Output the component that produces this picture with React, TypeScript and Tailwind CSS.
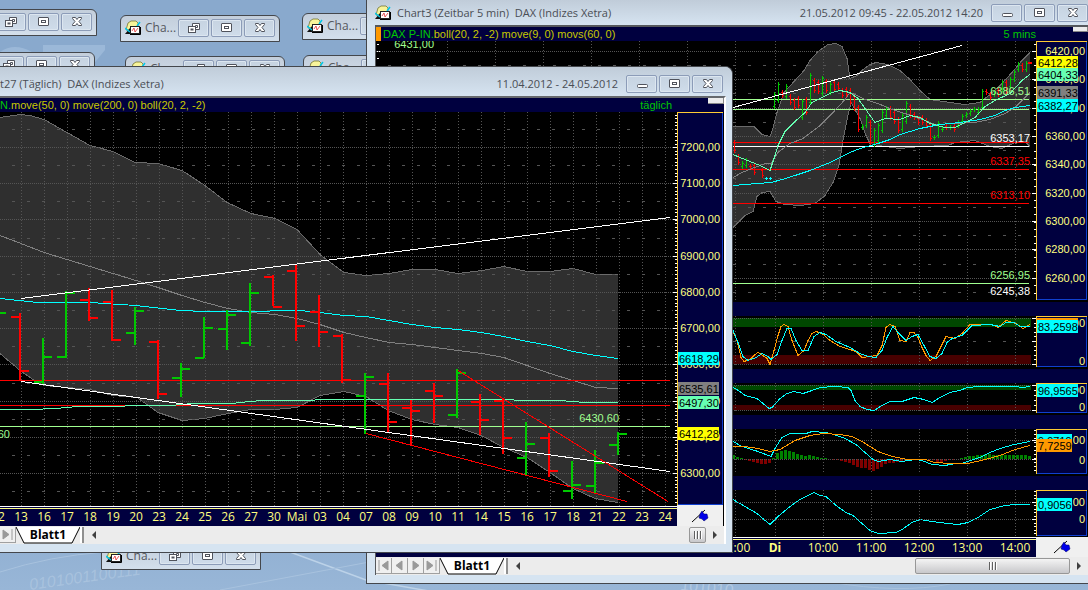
import type { ReactNode } from "react";

type Point = [number, number];
// x, high, low, open, close, rising
type Bar = [number, number, number, number, number, boolean];

const UI_FONT = "font-['Open_Sans','Noto_Sans',sans-serif]";
const CHART_FONT = "font-['Liberation_Sans',Arial,sans-serif]";

const GREEN = "#00c800";
const RED = "#ff0000";
const CYAN = "#00ffff";
const MINT = "#66ffb2";
const LIME = "#a0ff90";
const GRAY = "#808080";
const ORANGE = "#ff9900";
const NAVY = "#00003f";
const LABEL = "#ffff80";

const range = (count: number) => Array.from({ length: count }, (_, i) => i);
const toPoints = (points: Point[]) => points.map((p) => p.join(",")).join(" ");

/* ---------- daily chart data ---------- */

const dailyUpper: Point[] = [
  [0, 117], [20, 114], [30, 115], [44, 119], [67, 132], [90, 145], [113, 151], [135, 162], [158, 163],
  [182, 170], [205, 185], [227, 202], [251, 213], [275, 218], [297, 229], [309, 242], [321, 255],
  [344, 272], [366, 275], [389, 273], [412, 269], [435, 269], [458, 273], [482, 270], [504, 266],
  [527, 271], [550, 271], [573, 268], [596, 274], [618, 274],
];

const dailyLower: Point[] = [
  [0, 353], [20, 370], [33, 379], [44, 385], [90, 389], [113, 395], [137, 397], [158, 412], [182, 420],
  [205, 418], [228, 413], [251, 409], [275, 409], [297, 407], [320, 395], [344, 391], [366, 396],
  [374, 401], [388, 410], [412, 419], [435, 424], [458, 427], [481, 435], [504, 447], [527, 457],
  [550, 472], [573, 488], [595, 498], [618, 502],
];

const dailyMove50: Point[] = [
  [0, 235], [21, 243], [44, 252], [67, 259], [90, 266], [113, 273], [136, 280], [158, 287], [182, 295],
  [205, 302], [228, 308], [251, 312], [275, 314], [297, 318], [320, 324], [344, 332], [366, 337],
  [389, 342], [412, 344], [435, 347], [458, 350], [482, 353], [504, 357], [527, 365], [550, 373],
  [573, 380], [596, 387], [618, 388],
];

const dailyCyan: Point[] = [
  [0, 298], [38, 302], [90, 302], [136, 305], [180, 310], [205, 311], [240, 311], [300, 310], [320, 312],
  [344, 315], [366, 316], [389, 320], [412, 324], [435, 327], [458, 329], [481, 332], [504, 336],
  [527, 341], [550, 345], [573, 351], [596, 355], [618, 358],
];

const dailyMint: Point[] = [
  [0, 409], [32, 409], [55, 408], [78, 406], [124, 406], [126, 405], [170, 405], [193, 403], [232, 403],
  [240, 402], [262, 400], [310, 400], [320, 399], [513, 399], [515, 400], [560, 400], [585, 402], [618, 402],
];

const dailyBars: Bar[] = [
  [20, 313, 381, 316, 370, false],
  [43, 338, 384, 381, 356, true],
  [66, 291, 358, 356, 292, true],
  [89, 288, 321, 299, 317, false],
  [112, 290, 341, 301, 339, false],
  [135, 307, 345, 332, 310, true],
  [158, 340, 399, 341, 393, false],
  [181, 363, 397, 377, 368, true],
  [204, 317, 358, 357, 327, true],
  [227, 310, 350, 328, 314, true],
  [250, 283, 346, 342, 292, true],
  [273, 275, 306, 276, 306, false],
  [296, 265, 341, 270, 325, false],
  [319, 295, 347, 311, 331, false],
  [342, 334, 383, 335, 379, false],
  [365, 373, 434, 395, 376, true],
  [388, 373, 432, 383, 421, false],
  [411, 400, 445, 407, 410, false],
  [434, 383, 423, 390, 395, false],
  [457, 369, 418, 414, 372, true],
  [480, 394, 435, 401, 419, false],
  [503, 398, 454, 400, 437, false],
  [526, 422, 475, 457, 443, true],
  [549, 433, 477, 437, 470, false],
  [572, 461, 499, 490, 484, true],
  [595, 450, 493, 485, 462, true],
  [618, 432, 455, 444, 433, true],
];

const dailyDates = [
  "12", "13", "16", "17", "18", "19", "20", "23", "24", "25", "26", "27", "30", "Mai", "03", "04",
  "07", "08", "09", "10", "11", "14", "15", "16", "17", "18", "21", "22", "23", "24",
];

/* ---------- intraday chart data ---------- */

const intraUpper: Point[] = [
  [733, 126], [754, 126], [762, 134], [770, 136], [773, 128], [777, 112], [784, 92], [795, 80], [804, 70],
  [810, 60], [818, 51], [828, 44], [836, 43], [842, 46], [847, 58], [850, 78], [857, 75], [862, 70],
  [870, 64], [876, 62], [888, 64], [900, 70], [910, 79], [920, 90], [930, 99], [950, 102], [965, 104],
  [980, 102], [990, 94], [1000, 85], [1012, 72], [1022, 60], [1030, 52],
];

const intraLower: Point[] = [
  [733, 227], [745, 215], [753, 211], [757, 196], [762, 192], [770, 191], [776, 201], [785, 204],
  [800, 205], [815, 203], [825, 195], [833, 182], [839, 165], [843, 140], [848, 115], [851, 102],
  [860, 118], [866, 135], [870, 143], [878, 145], [900, 148], [920, 146], [948, 145], [955, 142],
  [975, 140], [990, 146], [1002, 148], [1015, 142], [1025, 141], [1030, 146],
];

const intraCyan: Point[] = [
  [733, 185], [745, 184], [771, 182], [782, 179], [795, 175], [810, 170], [830, 162], [850, 152],
  [860, 148], [878, 143], [890, 139], [900, 134], [920, 128], [940, 124], [960, 122], [980, 119],
  [995, 115], [1005, 110], [1015, 107], [1030, 105],
];

const intraMint: Point[] = [
  [733, 154], [745, 159], [760, 165], [770, 170], [775, 155], [778, 145], [785, 131], [795, 121],
  [805, 112], [812, 102], [822, 97], [832, 92], [840, 90], [850, 92], [858, 98], [865, 108], [875, 122],
  [885, 118], [900, 119], [910, 115], [920, 117], [930, 123], [945, 127], [955, 127], [965, 122],
  [975, 117], [985, 106], [995, 100], [1010, 93], [1022, 80], [1030, 74],
];

const intraGray: Point[] = [
  [733, 177], [742, 172], [752, 168], [760, 165], [765, 163], [771, 163], [778, 152], [790, 143],
  [803, 138], [820, 125], [832, 113], [845, 99], [850, 92], [857, 95], [865, 99], [878, 103], [892, 109],
  [905, 113], [920, 118], [935, 124], [955, 123], [975, 122], [990, 119], [1005, 113], [1015, 107],
  [1030, 92],
];

// x, high, low, rising
const intraBars: [number, number, number, boolean][] = [
  [734, 140, 153, false], [738, 154, 165, false], [742, 161, 169, true], [746, 158, 168, true],
  [750, 164, 169, false], [754, 163, 175, false], [762, 168, 178, false], [774, 92, 109, true],
  [778, 82, 103, true], [782, 90, 98, false], [786, 84, 99, true], [790, 94, 105, false],
  [794, 98, 110, false], [798, 96, 108, false], [802, 99, 120, true], [806, 97, 115, false],
  [810, 73, 105, true], [814, 78, 93, false], [818, 80, 94, false], [822, 76, 96, true],
  [826, 79, 93, false], [830, 82, 95, true], [834, 80, 92, false], [838, 82, 91, false],
  [842, 88, 98, false], [846, 87, 97, false], [850, 88, 105, false], [854, 94, 111, false],
  [858, 105, 132, false], [862, 124, 130, true], [866, 115, 128, true], [870, 120, 145, false],
  [874, 128, 147, true], [878, 123, 143, true], [882, 110, 133, true], [886, 106, 118, true],
  [890, 106, 120, false], [894, 110, 124, false], [898, 117, 133, false], [902, 113, 132, true],
  [906, 101, 124, true], [910, 104, 118, false], [914, 112, 120, false], [918, 116, 125, false],
  [922, 115, 125, false], [926, 118, 128, false], [930, 122, 141, false], [934, 135, 140, true],
  [938, 121, 138, true], [942, 127, 132, true], [946, 124, 130, false], [950, 125, 130, true],
  [954, 124, 132, false], [958, 120, 128, true], [962, 114, 124, true], [966, 112, 118, true],
  [970, 109, 116, true], [974, 107, 112, true], [978, 107, 115, true], [982, 89, 110, true],
  [986, 89, 95, false], [990, 92, 100, false], [994, 90, 97, true], [998, 88, 97, false],
  [1002, 80, 92, true], [1006, 80, 95, false], [1010, 77, 89, true], [1014, 70, 82, true],
  [1018, 62, 72, true], [1022, 63, 72, false], [1026, 61, 72, true],
];

const stochOrange: Point[] = [
  [733, 331], [737, 340], [741, 357], [744, 361], [750, 359], [754, 355], [758, 352], [763, 355],
  [767, 358], [770, 364], [774, 350], [778, 335], [781, 326], [784, 324], [788, 326], [792, 340],
  [798, 355], [804, 350], [808, 340], [812, 333], [816, 331], [822, 333], [830, 340], [840, 346],
  [850, 349], [856, 351], [862, 357], [870, 356], [877, 355], [882, 345], [886, 327], [890, 324],
  [895, 326], [900, 340], [906, 341], [910, 332], [914, 332], [918, 337], [922, 347], [926, 355],
  [930, 360], [936, 356], [940, 348], [946, 336], [955, 338], [962, 333], [970, 324], [980, 324],
  [992, 324], [998, 327], [1006, 320], [1016, 323], [1023, 328], [1030, 324],
];

const stochCyan: Point[] = [
  [733, 330], [738, 342], [743, 356], [748, 360], [756, 357], [762, 353], [768, 356], [771, 359],
  [777, 354], [782, 340], [787, 328], [791, 328], [796, 340], [802, 350], [808, 350], [814, 336],
  [820, 332], [826, 334], [836, 341], [850, 347], [860, 353], [868, 356], [876, 357], [882, 350],
  [887, 337], [893, 326], [898, 332], [906, 340], [912, 336], [918, 334], [924, 345], [930, 356],
  [936, 358], [942, 353], [947, 342], [952, 338], [962, 335], [972, 325], [990, 324], [1000, 326],
  [1006, 322], [1014, 322], [1020, 326], [1030, 326],
];

const rsiCyan: Point[] = [
  [733, 387], [740, 391], [745, 395], [757, 398], [763, 403], [769, 408], [772, 407], [780, 398],
  [787, 393], [794, 391], [803, 393], [812, 390], [820, 387], [835, 386], [848, 387], [851, 390],
  [855, 400], [860, 406], [867, 409], [874, 410], [882, 405], [890, 401], [902, 401], [914, 397],
  [924, 399], [932, 402], [940, 397], [950, 392], [960, 390], [967, 387], [980, 386], [1015, 386],
  [1022, 387], [1030, 386],
];

const macdCyan: Point[] = [
  [733, 441], [742, 446], [758, 451], [771, 456], [775, 448], [782, 437], [790, 433], [806, 433],
  [812, 431], [826, 432], [834, 434], [845, 438], [856, 444], [865, 452], [873, 459], [878, 461],
  [890, 459], [902, 461], [915, 459], [922, 460], [932, 464], [945, 465], [955, 463], [962, 463],
  [970, 460], [980, 457], [990, 452], [1000, 448], [1014, 444], [1030, 441],
];

const macdOrange: Point[] = [
  [733, 446], [745, 446], [758, 448], [770, 451], [780, 449], [795, 440], [810, 435], [823, 433],
  [840, 434], [852, 436], [862, 441], [870, 446], [878, 451], [892, 456], [908, 459], [925, 459],
  [935, 462], [950, 463], [968, 463], [985, 459], [1000, 455], [1015, 449], [1030, 445],
];

const macdHistogram = [
  4, 2, 1, -1, -2, -3, -4, -5, -5, -4, 1, 6, 8, 9, 8, 7, 5, 4, 3, 4, 3, 2, 1, 1, 0, -1, -1, -2, -3, -4,
  -6, -8, -9, -9, -11, -12, -10, -8, -5, -4, -4, -3, -3, -2, -1, -1, 0, -1, -1, -1, -1, -3, -3, -2,
  -1, -1, 0, 1, 2, 3, 3, 4, 4, 5, 5, 4, 4, 4, 4, 4, 4, 4, 4, 4, 3,
];

const momentumCyan: Point[] = [
  [733, 499], [745, 506], [757, 513], [770, 524], [778, 516], [790, 506], [800, 499], [808, 495],
  [814, 492], [820, 495], [826, 496], [836, 505], [846, 512], [853, 515], [862, 523], [870, 530],
  [878, 533], [896, 532], [902, 529], [912, 522], [920, 519], [932, 521], [948, 523], [958, 524],
  [968, 522], [978, 517], [990, 509], [1005, 505], [1015, 504], [1030, 504],
];

/* ---------- chart primitives ---------- */

function Line({ points, color }: { points: Point[]; color: string }) {
  return <polyline points={toPoints(points.map(([x, y]) => [x, y + 0.5]))} fill="none" stroke={color} />;
}

function HLine({ x1, x2, y, color }: { x1: number; x2: number; y: number; color: string }) {
  return <rect x={x1} y={y} width={x2 - x1} height={1} fill={color} />;
}

function Band({ upper, lower }: { upper: Point[]; lower: Point[] }) {
  return (
    <>
      <polygon points={toPoints([...upper, ...[...lower].reverse()])} fill="#2f2f2f" />
      <Line points={upper} color="#6b6b6b" />
      <Line points={lower} color="#6b6b6b" />
    </>
  );
}

interface GridProps {
  x1: number;
  x2: number;
  y1: number;
  y2: number;
  verticals: number[];
  majors: number[];
  minors?: number[];
}

function Grid({ x1, x2, y1, y2, verticals, majors, minors = [] }: GridProps) {
  return (
    <g stroke="#555555">
      {verticals.map((x) => (
        <line key={x} x1={x + 0.5} x2={x + 0.5} y1={y1} y2={y2} strokeDasharray="1 2" />
      ))}
      {majors.map((y) => (
        <line key={y} x1={x1} x2={x2} y1={y + 0.5} y2={y + 0.5} strokeDasharray="1 1" />
      ))}
      {minors.map((y) => (
        <line key={y} x1={x1 + 12} x2={x2} y1={y + 0.5} y2={y + 0.5} strokeDasharray="3 12" />
      ))}
    </g>
  );
}

function AxisPanel({ x, y, width, height }: { x: number; y: number; width: number; height: number }) {
  return (
    <>
      <rect x={x} y={y} width={width} height={height} fill={NAVY} />
      <rect x={x + width - 1} y={y} width={1} height={height} fill="#1040d0" />
      <rect x={x} y={y + height - 1} width={width} height={1} fill="#1040d0" />
      <rect x={x} y={y} width={width} height={1} fill="#ffcc33" />
      <rect x={x} y={y} width={1} height={height} fill="#ffcc33" />
    </>
  );
}

function Ticks({ x, ys, length }: { x: number; ys: number[]; length: number }) {
  return (
    <>
      {ys.map((y) => (
        <rect key={y} x={x - length} y={Math.round(y)} width={length} height={1} fill="#ffffff" />
      ))}
    </>
  );
}

function AxisText({ x, y, children, color = LABEL }: { x: number; y: number; children: ReactNode; color?: string }) {
  return (
    <text x={x} y={y + 4} textAnchor="end" fill={color} className={`${CHART_FONT} text-[11px]`}>
      {children}
    </text>
  );
}

function PriceTag({ x, y, width, color, children }: { x: number; y: number; width: number; color: string; children: ReactNode }) {
  return (
    <g>
      <rect x={x} y={y} width={width} height={13} fill={color} />
      <text x={x + 1} y={y + 11} fill="#000000" className={`${CHART_FONT} text-[11px]`}>
        {children}
      </text>
    </g>
  );
}

function PinIcon({ x, y }: { x: number; y: number }) {
  return (
    <g transform={`translate(${x} ${y})`} shapeRendering="geometricPrecision">
      <path d="M0 13 L13 1" stroke="#000000" fill="none" />
      <path d="M10 2 L12 5 L15 5 L16 9 L12 12 L10 10 L7 9 L8 5 Z" fill="#0000e8" stroke="#000060" strokeWidth="0.5" />
    </g>
  );
}

/* ---------- window chrome ---------- */

function ChartIcon() {
  return (
    <svg viewBox="0 0 16 16" className="h-4 w-4 shrink-0" aria-hidden="true">
      <path d="M1 10 L3 3 L6 1 H11 L13 3 V10 H5 Z" fill="#f8f49a" stroke="#66661e" strokeWidth="0.7" />
      <path d="M0 14 L5 8 V14 Z" fill="#111111" />
      <path d="M0 8 L5 12 M12 6 L15 2" stroke="#00c8e8" strokeWidth="1.5" />
      <rect x="5.5" y="6.5" width="9" height="7" fill="#ffffff" stroke="#222222" />
      <path d="M5 14.5 H15.5 V7" fill="none" stroke="#000000" />
      <path d="M7 11 L9 8 L10 12 L13 8" fill="none" stroke="#e03030" strokeWidth="0.8" />
    </svg>
  );
}

type ControlKind = "minimize" | "cascade" | "maximize" | "close";

const controlLabels: Record<ControlKind, string> = {
  minimize: "Minimieren",
  cascade: "Wiederherstellen",
  maximize: "Maximieren",
  close: "Schließen",
};

function ControlGlyph({ kind }: { kind: ControlKind }) {
  return (
    <svg viewBox="0 0 14 12" className="h-3 w-3.5" fill="#ffffff" stroke="#50535c" aria-hidden="true">
      {kind === "minimize" && <rect x="2.5" y="6.5" width="10" height="3" rx="1" />}
      {kind === "maximize" && (
        <>
          <rect x="1.5" y="1.5" width="10" height="8" rx="0.5" />
          <rect x="4.5" y="4.5" width="4" height="2" />
        </>
      )}
      {kind === "cascade" && (
        <>
          <path d="M5.5 1.5 H12.5 V7.5 H5.5 Z M8.5 3.5 H10.5 V5.5 H8.5 Z" />
          <rect x="1.5" y="4.5" width="7" height="6" />
          <rect x="4" y="7" width="2" height="1" />
        </>
      )}
      {kind === "close" && (
        <path d="M2.5 1.5 H5.5 L7 3.5 L8.5 1.5 H11.5 V2.5 L9 5.5 L11.5 8.5 V9.5 H8.5 L7 7.5 L5.5 9.5 H2.5 V8.5 L5 5.5 L2.5 2.5 Z" />
      )}
    </svg>
  );
}

function Controls({ kinds }: { kinds: ControlKind[] }) {
  return (
    <div className="flex shrink-0 gap-0.5">
      {kinds.map((kind) => (
        <button
          key={kind}
          type="button"
          aria-label={controlLabels[kind]}
          className="flex h-[18px] w-[31px] items-center justify-center rounded-xs border border-[#8c9cb8] bg-gradient-to-b from-[#c6d3e1] to-[#cfdcea] shadow-[inset_0_0_0_1px_#dce6f0]"
        >
          <ControlGlyph kind={kind} />
        </button>
      ))}
    </div>
  );
}

function MiniWindow({ className }: { className: string }) {
  return (
    <section
      className={`absolute flex h-[27px] w-40 items-center justify-between overflow-hidden rounded-t-md border border-[#44474c] bg-gradient-to-b from-[#c3cedb] to-[#d3dfec] pr-1 pb-0.5 pl-1 ${className}`}
    >
      <div className="flex items-center gap-1">
        <ChartIcon />
        <span className={`${UI_FONT} text-xs leading-4 text-[#55585e]`}>Cha...</span>
      </div>
      <Controls kinds={["cascade", "maximize", "close"]} />
    </section>
  );
}

function SheetTab({ label }: { label: string }) {
  return (
    <button type="button" className="relative h-[17px] w-16 shrink-0">
      <svg viewBox="0 0 64 17" className="absolute inset-0 h-full w-full" aria-hidden="true">
        <path d="M0 0 L8 16 H56 L64 0" fill="#ffffff" stroke="#000000" />
      </svg>
      <span className={`relative block text-center ${UI_FONT} text-xs leading-4 font-bold text-black`}>{label}</span>
    </button>
  );
}

function NavButton({ label, path }: { label: string; path: string }) {
  return (
    <button type="button" aria-label={label} className="h-4 w-4 shrink-0 border-r border-b border-[#a0a0a0] bg-[#f0f0f0]">
      <svg viewBox="0 0 15 15" className="h-full w-full" fill="#9a9a9a" stroke="#9a9a9a" aria-hidden="true">
        <path d={path} />
      </svg>
    </button>
  );
}

function ScrollArrow({ label, path }: { label: string; path: string }) {
  return (
    <button type="button" aria-label={label} className="flex h-4 w-[18px] shrink-0 items-center justify-center">
      <svg viewBox="0 0 5 8" className="h-2 w-[5px]" fill="#404040" aria-hidden="true">
        <path d={path} />
      </svg>
    </button>
  );
}

function ScrollThumb({ className }: { className: string }) {
  return (
    <button
      type="button"
      aria-label="Bildlauf"
      className={`flex h-4 shrink-0 items-center justify-center gap-px rounded-xs border border-[#979797] bg-gradient-to-b from-[#f4f4f4] to-[#c8c8cb] ${className}`}
    >
      {range(3).map((i) => (
        <span key={i} className="h-2 w-0.5 border-r border-white bg-[#606060]" />
      ))}
    </button>
  );
}

function SheetBar({ navPaths, thumbClass }: { navPaths: [string, string][]; thumbClass: string }) {
  return (
    <div className="flex h-[18px] items-center bg-[#ececec]">
      {navPaths.map(([label, path]) => (
        <NavButton key={label} label={label} path={path} />
      ))}
      <SheetTab label="Blatt1" />
      <div className="h-4 w-1 shrink-0 border-r-2 border-[#909090] bg-white" />
      <ScrollArrow label="Nach links" path="M5 0 L1 4 L5 8 Z" />
      <div className="grow" />
      <ScrollThumb className={thumbClass} />
      <ScrollArrow label="Nach rechts" path="M0 0 L4 4 L0 8 Z" />
    </div>
  );
}

/* ---------- charts ---------- */

function DailyChart() {
  const majors = [147, 183, 219, 256, 292, 328, 364, 401, 437, 473];
  const minors = [129, 165, 201, 238, 274, 310, 346, 383, 419, 455, 491];
  return (
    <svg
      viewBox="0 112 723 414"
      preserveAspectRatio="xMinYMin meet"
      className="block h-[414px] w-full bg-black"
      shapeRendering="crispEdges"
      role="img"
      aria-label="DAX Tageschart"
    >
      <Band upper={dailyUpper} lower={dailyLower} />
      <Grid x1={0} x2={673} y1={112} y2={506} verticals={range(29).map((i) => 21 + i * 23)} majors={majors} minors={minors} />

      <Line points={dailyMove50} color={GRAY} />
      <Line points={dailyCyan} color={CYAN} />
      <HLine x1={0} x2={670} y={380} color={RED} />
      <HLine x1={0} x2={670} y={405} color={RED} />
      <HLine x1={0} x2={670} y={426} color={LIME} />
      <Line points={dailyMint} color={MINT} />
      <rect x={0} y={312} width={6} height={2} fill={GREEN} />
      {dailyBars.map(([x, high, low, open, close, rising]) => (
        <g key={x} fill={rising ? GREEN : RED}>
          <rect x={x - 1} y={high} width={2} height={low - high} />
          <rect x={x - 9} y={open} width={9} height={2} />
          <rect x={x} y={close} width={9} height={2} />
        </g>
      ))}
      <Line points={[[21, 298], [670, 217]]} color="#ffffff" />
      <Line points={[[21, 381], [670, 471]]} color="#ffffff" />
      <Line points={[[366, 433], [627, 501]]} color={RED} />
      <Line points={[[458, 370], [668, 501]]} color={RED} />
      <AxisText x={619} y={418} color={LIME}>6430,60</AxisText>
      <AxisText x={10} y={434} color={LIME}>60</AxisText>

      {/* price axis */}
      <Ticks x={677} ys={range(109).map((i) => 111 + i * 3.62)} length={2} />
      <Ticks x={677} ys={majors} length={4} />
      <AxisPanel x={677} y={112} width={46} height={393} />
      {majors.map((y, i) => (
        <AxisText key={y} x={720} y={y}>{`${7200 - i * 100},00`}</AxisText>
      ))}
      <PriceTag x={678} y={352} width={41} color={CYAN}>6618,29</PriceTag>
      <PriceTag x={678} y={382} width={41} color={GRAY}>6535,61</PriceTag>
      <PriceTag x={678} y={396} width={41} color={MINT}>6497,30</PriceTag>
      <PriceTag x={678} y={427} width={41} color="#ffff00">6412,28</PriceTag>

      {/* date axis */}
      <rect x={0} y={506} width={677} height={20} fill={NAVY} />
      <rect x={0} y={506} width={677} height={1} fill="#ffffff" />
      <rect x={0} y={508} width={677} height={1} fill={LABEL} />
      {dailyDates.map((date, i) => (
        <text key={i} x={i * 23 - 2} y={521} textAnchor="middle" fill={LABEL} className={`${UI_FONT} text-xs`}>
          {date}
        </text>
      ))}
      <rect x={677} y={505} width={46} height={21} fill="#f0f0f0" />
      <PinIcon x={692} y={509} />
    </svg>
  );
}

const intraVerticals = [447, 495, 543, 591, 639, 687, 735, 775, 823, 871, 919, 967, 1015];

function SubPane({ y, height, majors, minors, children }: { y: number; height: number; majors: number[]; minors?: number[]; children: ReactNode }) {
  return (
    <g>
      {children}
      <Grid x1={376} x2={1031} y1={y} y2={y + height} verticals={intraVerticals} majors={majors} minors={minors} />
    </g>
  );
}

function IntradayChart() {
  const majors = [51, 79, 108, 136, 164, 193, 221, 249, 278];
  const minors = [65, 93, 122, 150, 178, 207, 235, 264, 292];
  return (
    <svg
      viewBox="376 41 712 516"
      preserveAspectRatio="xMaxYMin meet"
      className="block h-[516px] w-full bg-black"
      shapeRendering="crispEdges"
      role="img"
      aria-label="DAX 5 Minuten Chart"
    >
      <AxisText x={434} y={44} color={LIME}>6431,00</AxisText>
      <Ticks x={379} ys={[44, 58]} length={2} />
      <Ticks x={381} ys={[51]} length={4} />

      <Band upper={intraUpper} lower={intraLower} />
      <Grid x1={376} x2={1031} y1={41} y2={300} verticals={intraVerticals} majors={majors} minors={minors} />

      <HLine x1={376} x2={1029} y={99} color={LIME} />
      <HLine x1={376} x2={1029} y={109} color={LIME} />
      <HLine x1={376} x2={1029} y={142} color={RED} />
      <HLine x1={376} x2={1029} y={146} color="#ffffff" />
      <HLine x1={376} x2={1029} y={169} color={RED} />
      <HLine x1={376} x2={1029} y={203} color={RED} />
      <HLine x1={376} x2={1029} y={283} color={LIME} />
      {intraBars.map(([x, high, low, rising]) => (
        <g key={x} fill={rising ? GREEN : RED}>
          <rect x={x} y={high} width={1} height={low - high} />
          <rect x={x - 1} y={rising ? low - 3 : high + 2} width={1} height={1} />
          <rect x={x + 1} y={rising ? high + 2 : low - 3} width={1} height={1} />
        </g>
      ))}
      <rect x={1028} y={62} width={4} height={2} fill={RED} />
      <path d="M765 178.5 h3 m1 0 h3 M766.5 177 v3 M770.5 177 v3" stroke={CYAN} />
      <Line points={intraGray} color={GRAY} />
      <Line points={intraCyan} color={CYAN} />
      <Line points={intraMint} color={MINT} />
      <Line points={[[733, 107], [962, 45]]} color="#ffffff" />

      <AxisText x={1030} y={91} color={LIME}>6386,51</AxisText>
      <AxisText x={1030} y={138} color="#ffffff">6353,17</AxisText>
      <AxisText x={1030} y={161} color={RED}>6337,35</AxisText>
      <AxisText x={1030} y={195} color={RED}>6313,10</AxisText>
      <AxisText x={1030} y={275} color={LIME}>6256,95</AxisText>
      <AxisText x={1030} y={291} color="#ffffff">6245,38</AxisText>

      {/* price axis */}
      <Ticks x={1036} ys={range(36).map((i) => 44 + i * 7.1)} length={2} />
      <Ticks x={1036} ys={majors} length={4} />
      <AxisPanel x={1036} y={41} width={51} height={259} />
      {majors.map((y, i) => (
        <AxisText key={y} x={1085} y={y}>{`${6420 - i * 20},00`}</AxisText>
      ))}
      <PriceTag x={1037} y={56} width={41} color="#ffff00">6412,28</PriceTag>
      <PriceTag x={1037} y={68} width={41} color={MINT}>6404,33</PriceTag>
      <PriceTag x={1037} y={86} width={41} color={GRAY}>6391,33</PriceTag>
      <PriceTag x={1037} y={99} width={41} color={CYAN}>6382,27</PriceTag>

      {/* pane separators */}
      {[302, 369, 415, 476].map((y) => (
        <rect key={y} x={376} y={y} width={712} height={14} fill={NAVY} />
      ))}

      <SubPane y={316} height={51} majors={[318, 364]} minors={[341]}>
        <rect x={376} y={318} width={655} height={9} fill="#004800" />
        <rect x={376} y={355} width={655} height={9} fill="#480000" />
      </SubPane>
      <Line points={stochOrange} color={ORANGE} />
      <Line points={stochCyan} color={CYAN} />
      <Ticks x={1036} ys={range(11).map((i) => 318 + i * 4.6)} length={2} />
      <Ticks x={1036} ys={[318, 341, 364]} length={4} />
      <AxisPanel x={1036} y={316} width={51} height={51} />
      <AxisText x={1085} y={323}>100</AxisText>
      <AxisText x={1085} y={361}>0</AxisText>
      <rect x={1037} y={318} width={41} height={3} fill={ORANGE} />
      <PriceTag x={1037} y={320} width={41} color={CYAN}>83,2598</PriceTag>

      <SubPane y={383} height={29} majors={[385, 410]}>
        <rect x={376} y={385} width={655} height={5} fill="#004800" />
        <rect x={376} y={405} width={655} height={5} fill="#480000" />
      </SubPane>
      <Line points={rsiCyan} color={CYAN} />
      <Ticks x={1036} ys={range(6).map((i) => 385 + i * 5)} length={2} />
      <Ticks x={1036} ys={[385, 410]} length={4} />
      <AxisPanel x={1036} y={383} width={51} height={30} />
      <AxisText x={1085} y={390}>100</AxisText>
      <AxisText x={1085} y={407}>0</AxisText>
      <PriceTag x={1037} y={384} width={41} color={CYAN}>96,9565</PriceTag>

      <SubPane y={429} height={45} majors={[440, 459]}>
        {macdHistogram.map((v, i) => (
          <rect
            key={i}
            x={732 + i * 4}
            y={v > 0 ? 459 - v : 459}
            width={3}
            height={Math.abs(v)}
            fill={v > 0 ? "#008000" : "#800000"}
          />
        ))}
      </SubPane>
      <Line points={macdCyan} color={CYAN} />
      <Line points={macdOrange} color={ORANGE} />
      <Ticks x={1036} ys={range(11).map((i) => 430 + i * 4)} length={2} />
      <Ticks x={1036} ys={[440, 459]} length={4} />
      <AxisPanel x={1036} y={429} width={51} height={45} />
      <AxisText x={1085} y={440}>10,00</AxisText>
      <AxisText x={1085} y={460}>0</AxisText>
      <PriceTag x={1037} y={434} width={35} color={CYAN}>9,9719</PriceTag>
      <PriceTag x={1037} y={439} width={35} color={ORANGE}>7,7259</PriceTag>

      <SubPane y={490} height={46} majors={[502, 519]}>
        <Line points={momentumCyan} color={CYAN} />
      </SubPane>
      <Ticks x={1036} ys={range(13).map((i) => 491 + i * 3.5)} length={2} />
      <Ticks x={1036} ys={[502, 519]} length={4} />
      <AxisPanel x={1036} y={490} width={51} height={46} />
      <AxisText x={1085} y={502}>1,00</AxisText>
      <AxisText x={1085} y={519}>0</AxisText>
      <PriceTag x={1037} y={498} width={35} color={CYAN}>0,9056</PriceTag>

      {/* time axis */}
      <rect x={376} y={537} width={660} height={20} fill={NAVY} />
      <rect x={376} y={537} width={660} height={1} fill="#ffffff" />
      <rect x={376} y={539} width={660} height={1} fill={LABEL} />
      {["17:00", "Di", "10:00", "11:00", "12:00", "13:00", "14:00"].map((time, i) => (
        <text
          key={time}
          x={intraVerticals[i + 6]}
          y={552}
          textAnchor="middle"
          fill={LABEL}
          fontWeight={time === "Di" ? 700 : 400}
          className={`${UI_FONT} text-xs`}
        >
          {time}
        </text>
      ))}
      <rect x={1036} y={537} width={52} height={20} fill="#f0f0f0" />
      <PinIcon x={1054} y={540} />
    </svg>
  );
}

interface ChartHeaderProps {
  symbol: string;
  studies: string;
  interval: string;
  marker?: boolean;
}

function ChartHeader({ symbol, studies, interval, marker }: ChartHeaderProps) {
  return (
    <div className={`flex h-[14px] items-start overflow-hidden bg-[#00003f] ${CHART_FONT} text-[11px] leading-[14px] whitespace-nowrap`}>
      {marker && <span className="mr-0.5 h-[14px] w-[5px] shrink-0 bg-[#ff9900]" />}
      <span className="text-[#00c800]">{symbol}</span>
      <span className="grow text-[#c8c800]">{studies}</span>
      <span className="mr-[52px] text-[#00c800]">{interval}</span>
    </div>
  );
}

function IntradayWindow() {
  return (
    <section className="absolute top-0 right-0 left-[366px] border-b border-l border-[#44474c] bg-[#d6e4f1] pb-2 pl-2">
      <header className="-ml-2 flex h-[25px] items-center justify-between bg-gradient-to-b from-[#c0ccd9] to-[#d6e4f1] pl-2">
        <div className="flex items-center gap-1.5">
          <ChartIcon />
          <h2 className={`${UI_FONT} text-[11px] leading-4 whitespace-pre text-[#4a4e55]`}>
            {"Chart3 (Zeitbar 5 min)  DAX (Indizes Xetra)"}
          </h2>
        </div>
        <div className="flex items-center gap-2">
          <span className={`${UI_FONT} text-[11px] leading-4 text-[#4a4e55]`}>21.05.2012 09:45 - 22.05.2012 14:20</span>
          <Controls kinds={["minimize", "maximize", "close"]} />
        </div>
      </header>
      <div className="relative border-t-2 border-l border-[#55585c]">
        <ChartHeader marker symbol="DAX P-IN." studies="boll(20, 2, -2) move(9, 0) movs(60, 0)" interval="5 mins" />
        <span className="absolute top-0 right-0 h-[5px] w-[15px] border-r border-b border-[#888888] bg-[#ececec]" />
        <IntradayChart />
        <SheetBar
          navPaths={[
            ["Erstes Blatt", "M3 2 V13 M12 3 V12 L6 7.5 Z"],
            ["Vorheriges Blatt", "M10 3 V12 L4 7.5 Z"],
            ["Nächstes Blatt", "M5 3 V12 L11 7.5 Z"],
            ["Letztes Blatt", "M3 3 V12 L9 7.5 Z M12 2 V13"],
          ]}
          thumbClass="w-[155px]"
        />
      </div>
    </section>
  );
}

function DailyWindow() {
  return (
    <section className="absolute top-[66px] left-0 w-[733px] overflow-hidden rounded-tr-lg border-t border-r border-b border-[#44474c] bg-[#d6e4f1] pr-1.5 pb-2">
      <header className="-mr-1.5 flex h-[29px] items-center justify-between bg-gradient-to-b from-[#c0ccd9] to-[#d6e4f1] pt-1 pr-[9px]">
        <h2 className={`${UI_FONT} text-[11px] leading-4 whitespace-pre text-[#4a4e55]`}>
          {"t27 (Täglich)  DAX (Indizes Xetra)"}
        </h2>
        <div className="flex items-center gap-2">
          <span className={`${UI_FONT} text-[11px] leading-4 text-[#4a4e55]`}>11.04.2012 - 24.05.2012</span>
          <Controls kinds={["minimize", "maximize", "close"]} />
        </div>
      </header>
      <div className="relative border-t-2 border-r-2 border-t-[#66696d] border-r-white">
        <ChartHeader symbol="N." studies="move(50, 0) move(200, 0) boll(20, 2, -2)" interval="täglich" />
        <span className="absolute top-0 right-0 h-[6px] w-4 border-r border-b border-[#888888] bg-[#ececec]" />
        <DailyChart />
        <SheetBar navPaths={[["Letztes Blatt", "M3 3 V12 L9 7.5 Z M12 2 V13"]]} thumbClass="w-[17px]" />
      </div>
    </section>
  );
}

function Wallpaper() {
  return (
    <svg viewBox="0 0 1088 590" preserveAspectRatio="xMinYMax slice" className="absolute inset-0 h-full w-full" aria-hidden="true">
      <path d="M43 45 H105 V50 L92 66 H78 L90 56 H43 Z M0 52 Q14 42 32 52 L34 66 H0 Z" fill="#9bb8d8" />
      <path d="M290 552 L366 580 L480 600" stroke="#bcd2e8" strokeWidth="1.5" fill="none" />
      <path d="M0 572 Q50 556 105 552 M830 582 Q900 594 950 584 M220 590 L380 560" stroke="#a8c2de" fill="none" />
      <text x="30" y="590" fill="#b4cbe3" fillOpacity="0.6" transform="rotate(-8 30 590)" className="font-['Liberation_Sans',sans-serif] text-base italic">
        0101001100111
      </text>
      <text x="680" y="590" fill="#bdd2e8" fillOpacity="0.7" transform="rotate(6 680 590)" className="font-['Liberation_Sans',sans-serif] text-base">
        101010
      </text>
    </svg>
  );
}

export default function App() {
  return (
    <main className="relative h-screen min-h-[590px] w-full overflow-hidden bg-gradient-to-b from-[#89a9cd] from-80% to-[#98b6d7]">
      <Wallpaper />
      <MiniWindow className="top-[9px] -left-[63px]" />
      <MiniWindow className="top-[15px] left-[120px]" />
      <MiniWindow className="top-[13px] left-[302px]" />
      <MiniWindow className="top-[52px] -left-[65px]" />
      <MiniWindow className="top-[56px] left-[125px]" />
      <MiniWindow className="top-[55px] left-[303px]" />
      <MiniWindow className="top-[543px] left-[101px]" />
      <IntradayWindow />
      <DailyWindow />
    </main>
  );
}
